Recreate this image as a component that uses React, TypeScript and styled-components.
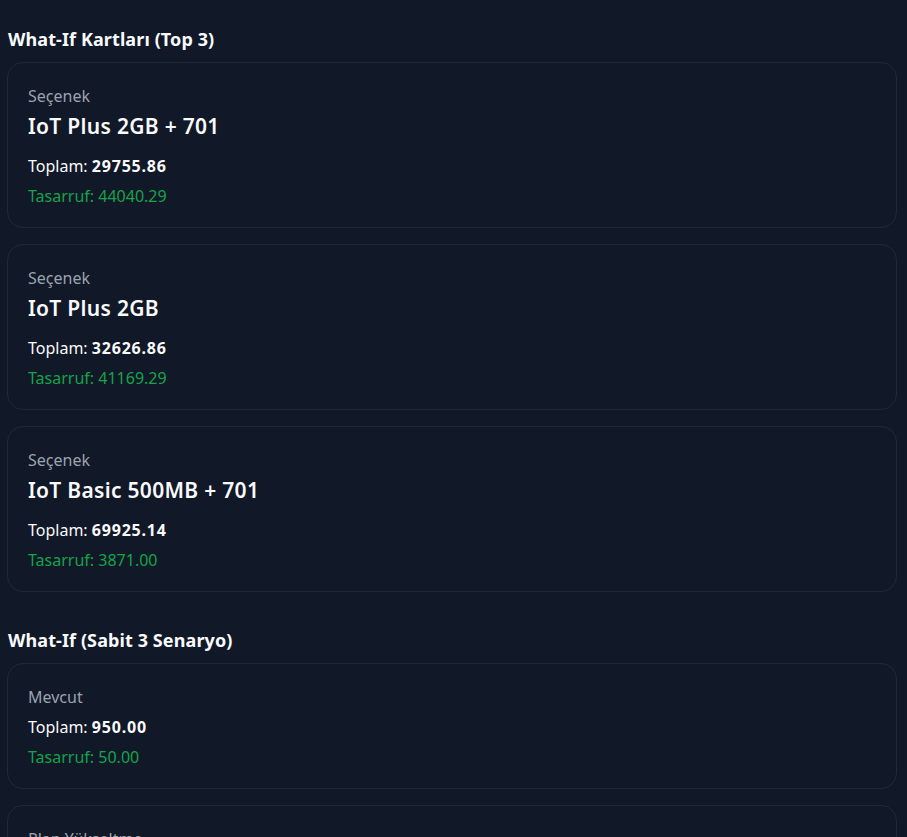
import styled, { createGlobalStyle } from "styled-components";

const GlobalStyle = createGlobalStyle`
  html, body {
    margin: 0;
    padding: 0;
    background: #111827;
  }
  body {
    font-family: "Noto Sans", "Open Sans", sans-serif;
    color: #f9fafb;
  }
`;

const Page = styled.div`
  padding: 25px 10px 40px 7px;
  display: flex;
  flex-direction: column;
  gap: 34px;
`;

const Section = styled.section`
  display: flex;
  flex-direction: column;
`;

const Heading = styled.h3`
  margin: 0 0 9px 1px;
  font-size: 18px;
  line-height: 28px;
  font-weight: 700;
  letter-spacing: 0.1px;
  color: #f9fafb;
`;

const CardList = styled.div`
  display: flex;
  flex-direction: column;
  gap: 16px;
`;

const Card = styled.div`
  border: 1px solid #1f2937;
  border-radius: 16px;
  padding: 18px 20px 16px;
`;

const Label = styled.div`
  font-size: 16px;
  line-height: 30px;
  color: #9ca3af;
`;

const Title = styled.div`
  font-size: 21px;
  line-height: 30px;
  font-weight: 600;
  letter-spacing: 0.3px;
  color: #f9fafb;
  margin-bottom: 10px;
`;

const Total = styled.div`
  font-size: 16px;
  line-height: 30px;
  color: #f9fafb;
  b {
    font-weight: 700;
    letter-spacing: 0.8px;
  }
`;

const Saving = styled.div`
  font-size: 16px;
  line-height: 30px;
  color: #16a34a;
`;

type Option = {
  label: string;
  title?: string;
  total: string;
  saving: string;
};

const topCards: Option[] = [
  { label: "Seçenek", title: "IoT Plus 2GB + 701", total: "29755.86", saving: "44040.29" },
  { label: "Seçenek", title: "IoT Plus 2GB", total: "32626.86", saving: "41169.29" },
  { label: "Seçenek", title: "IoT Basic 500MB + 701", total: "69925.14", saving: "3871.00" },
];

const scenarios: Option[] = [
  { label: "Mevcut", total: "950.00", saving: "50.00" },
  { label: "Plan Yükseltme", total: "820.00", saving: "180.00" },
  { label: "Ek Paket", total: "890.00", saving: "110.00" },
];

const OptionCard = ({ label, title, total, saving }: Option) => (
  <Card>
    <Label>{label}</Label>
    {title ? <Title>{title}</Title> : null}
    <Total>
      Toplam: <b>{total}</b>
    </Total>
    <Saving>Tasarruf: {saving}</Saving>
  </Card>
);

export default function App() {
  return (
    <>
      <GlobalStyle />
      <Page>
        <Section>
          <Heading>What-If Kartları (Top 3)</Heading>
          <CardList>
            {topCards.map((c, i) => (
              <OptionCard key={i} {...c} />
            ))}
          </CardList>
        </Section>
        <Section>
          <Heading>What-If (Sabit 3 Senaryo)</Heading>
          <CardList>
            {scenarios.map((c, i) => (
              <OptionCard key={i} {...c} />
            ))}
          </CardList>
        </Section>
      </Page>
    </>
  );
}
